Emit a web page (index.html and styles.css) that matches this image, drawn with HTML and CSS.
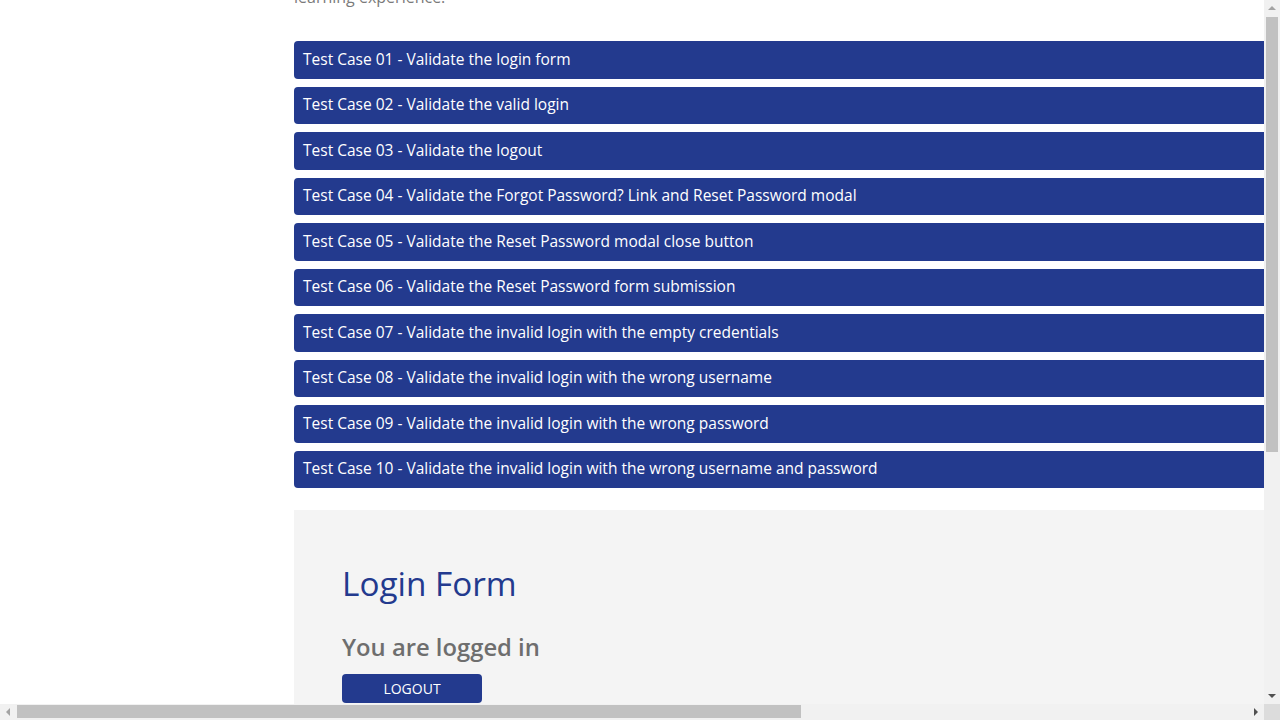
FILE: index.html
```html
<!DOCTYPE html>
<html lang="en">
<head>
<meta charset="utf-8">
<title>Login Tests</title>
<link rel="stylesheet" href="styles.css">
</head>
<body>
<div class="viewport">
  <div class="content">
    <div class="page">
      <aside class="sidebar"></aside>
      <main class="main">
        <p class="intro">learning experience.</p>
        <ul class="cases">
          <li class="case">Test Case 01 - Validate the login form</li>
          <li class="case">Test Case 02 - Validate the valid login</li>
          <li class="case">Test Case 03 - Validate the logout</li>
          <li class="case">Test Case 04 - Validate the Forgot Password? Link and Reset Password modal</li>
          <li class="case">Test Case 05 - Validate the Reset Password modal close button</li>
          <li class="case">Test Case 06 - Validate the Reset Password form submission</li>
          <li class="case">Test Case 07 - Validate the invalid login with the empty credentials</li>
          <li class="case">Test Case 08 - Validate the invalid login with the wrong username</li>
          <li class="case">Test Case 09 - Validate the invalid login with the wrong password</li>
          <li class="case">Test Case 10 - Validate the invalid login with the wrong username and password</li>
        </ul>
        <section class="login">
          <h1 class="login-title">Login Form</h1>
          <h2 class="login-status">You are logged in</h2>
          <button class="btn" type="button">LOGOUT</button>
        </section>
      </main>
    </div>
  </div>
  <div class="vscroll">
    <div class="sb-btn"><span class="arrow arrow-up"></span></div>
    <div class="v-track"><div class="v-thumb"></div></div>
    <div class="sb-btn"><span class="arrow arrow-down"></span></div>
  </div>
  <div class="hscroll">
    <div class="sb-btn"><span class="arrow arrow-left"></span></div>
    <div class="h-track"><div class="h-thumb"></div></div>
    <div class="sb-btn"><span class="arrow arrow-right"></span></div>
  </div>
  <div class="corner"></div>
</div>
</body>
</html>
```
FILE: styles.css
```css
html, body {
  margin: 0;
  padding: 0;
  background: #ffffff;
  overflow: hidden;
}
body {
  font-family: "Open Sans", "DejaVu Sans", sans-serif;
}
.viewport {
  display: grid;
  grid-template-columns: 1264px 16px;
  grid-template-rows: 704px 16px;
  width: 1280px;
  height: 720px;
  overflow: hidden;
}
.content {
  overflow: hidden;
  min-width: 0;
  min-height: 0;
}
.page {
  display: flex;
  width: 1986px;
}
.sidebar {
  flex: 0 0 294px;
}
.main {
  flex: 1 1 auto;
}
.intro {
  margin: -15px 0 0;
  font-size: 16px;
  line-height: 24px;
  color: #7a7a7a;
}
.cases {
  list-style: none;
  margin: 32px 0 0;
  padding: 0;
  display: flex;
  flex-direction: column;
  gap: 8px;
}
.case {
  height: 37.5px;
  box-sizing: border-box;
  display: flex;
  align-items: center;
  padding: 0 9px 2px;
  background: #233a8e;
  color: #ffffff;
  border-radius: 4px;
  font-size: 15.5px;
  font-weight: 500;
}
.login {
  margin-top: 22px;
  background: #f4f4f4;
  padding: 48px 48px 0;
  height: 576px;
  box-sizing: border-box;
}
.login-title {
  margin: 0;
  font-size: 33.3px;
  line-height: 50px;
  font-weight: 500;
  color: #233a8e;
}
.login-status {
  margin: 24px 0 0;
  font-size: 23.8px;
  line-height: 30px;
  font-weight: 600;
  color: #6e6e6e;
}
.btn {
  display: block;
  margin-top: 12px;
  width: 140px;
  height: 29px;
  border: 0;
  border-radius: 4px;
  background: #233a8e;
  color: #ffffff;
  font-family: inherit;
  font-size: 14px;
  font-weight: 500;
  padding: 0;
}

/* scrollbars */
.vscroll {
  display: flex;
  flex-direction: column;
  background: #f1f1f1;
}
.hscroll {
  display: flex;
  background: #f1f1f1;
}
.corner {
  background: #dcdcdc;
}
.sb-btn {
  flex: 0 0 16px;
  width: 16px;
  height: 16px;
  display: flex;
  align-items: center;
  justify-content: center;
}
.v-track {
  flex: 1 1 auto;
  padding: 1px 2px 0;
}
.v-thumb {
  height: 435px;
  background: #c1c1c1;
}
.h-track {
  flex: 1 1 auto;
  padding: 1px 0 2px 1px;
}
.h-thumb {
  width: 784px;
  height: 13px;
  background: #c1c1c1;
}
.arrow {
  width: 0;
  height: 0;
  border-style: solid;
}
.arrow-up {
  border-width: 0 4px 4px;
  border-color: transparent transparent #a3a3a3;
}
.arrow-down {
  border-width: 4px 4px 0;
  border-color: #505050 transparent transparent;
}
.arrow-left {
  border-width: 4px 4px 4px 0;
  border-color: transparent #a3a3a3 transparent transparent;
}
.arrow-right {
  border-width: 4px 0 4px 4px;
  border-color: transparent transparent transparent #505050;
}
```
